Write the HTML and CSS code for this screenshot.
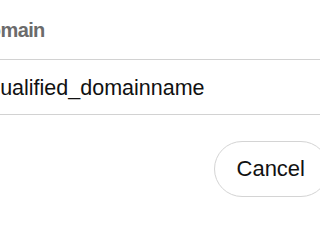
FILE: index.html
```html
<!DOCTYPE html>
<html>
<head>
<meta charset="utf-8">
<link rel="stylesheet" href="styles.css">
</head>
<body>
<form class="form">
  <div class="label">Domain</div>
  <div class="field">fully_qualified_domainname</div>
  <div class="actions">
    <button type="button" class="btn">Cancel</button>
  </div>
</form>
</body>
</html>
```
FILE: styles.css
```css
html, body {
  margin: 0;
  padding: 0;
  background: #fff;
  overflow: hidden;
}
body {
  font-family: "Liberation Sans", Arial, sans-serif;
  width: 320px;
  height: 214px;
}
.form {
  display: flex;
  flex-direction: column;
}
.label {
  font-size: 20px;
  line-height: 20px;
  font-weight: bold;
  letter-spacing: -0.6px;
  color: #6b6b6b;
  padding: 20px 0 19px 0;
  margin-left: -25px;
  white-space: nowrap;
}
.field {
  border-top: 1px solid #d2d2d2;
  border-bottom: 1px solid #d2d2d2;
  font-size: 21.5px;
  line-height: 21px;
  color: #111;
  padding: 18px 0 15px 0;
  white-space: nowrap;
  overflow: hidden;
  text-indent: -62px;
}
.actions {
  display: flex;
  justify-content: flex-end;
  margin-top: 26px;
  margin-right: -9px;
}
.btn {
  font-family: "Liberation Sans", Arial, sans-serif;
  font-size: 22px;
  color: #111;
  background: #fff;
  border: 1.5px solid #d4d4d4;
  border-radius: 28px;
  height: 56px;
  padding: 0 23px 0 22px;
}
```
